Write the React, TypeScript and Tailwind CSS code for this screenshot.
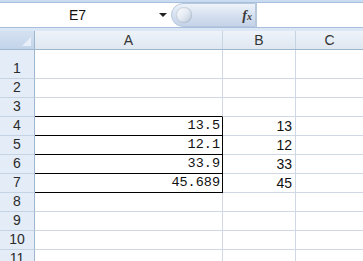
const rows: { n: number; a?: string; b?: string; h: number }[] = [
  { n: 1, h: 29 },
  { n: 2, h: 19 },
  { n: 3, h: 19 },
  { n: 4, a: '13.5', b: '13', h: 19 },
  { n: 5, a: '12.1', b: '12', h: 19 },
  { n: 6, a: '33.9', b: '33', h: 19 },
  { n: 7, a: '45.689', b: '45', h: 19 },
  { n: 8, h: 19 },
  { n: 9, h: 19 },
  { n: 10, h: 19 },
  { n: 11, h: 19 },
]

const grid = 'border-[#d0d7e5]'

export default function App() {
  return (
    <div className="w-[363px] h-[261px] overflow-hidden bg-white" style={{ fontFamily: '"Liberation Sans", Arial, sans-serif' }}>
      {/* ribbon edge */}
      <div className="h-[3px] bg-[#c9dbf0] border-b border-[#a7bfdc]" />

      {/* name box + formula bar */}
      <div className="flex h-[24px] bg-white">
        <div className="flex w-[171px] items-center">
          <span className="w-[155px] text-center text-[14px] text-[#111]">E7</span>
          <span className="ml-[4px] h-0 w-0 border-x-[4px] border-t-[4px] border-x-transparent border-t-[#222]" />
        </div>
        <div className="relative flex w-[85px] items-center justify-end rounded-l-full border border-[#b7c8dc] bg-gradient-to-b from-[#eef3fa] via-[#d6e1f0] to-[#c4d3e8] pr-[3px]">
          <span className="absolute left-[4px] top-[3px] h-[16px] w-[16px] rounded-full bg-gradient-to-br from-white via-[#e6ecf4] to-[#b9c6d6] shadow-[inset_0_0_2px_#8a9bb0]" />
          <span className="text-[14px] font-bold italic text-[#3a3a3a]" style={{ fontFamily: '"Liberation Serif", serif' }}>
            f<span className="text-[10px]">x</span>
          </span>
        </div>
        <div className="flex-1 border-l border-[#b7c8dc]" />
      </div>
      <div className="h-[4px] border-t border-[#a7bfdc] bg-[#dce7f5]" />

      {/* column headers */}
      <div className="flex h-[19px] text-[14px] text-[#333] bg-gradient-to-b from-[#eef3f9] to-[#dfe7f1] border-b border-[#9eb6ce]">
        <div className="relative w-[35px] border-r border-[#9eb6ce] bg-gradient-to-b from-[#d4e1f1] to-[#c3d4ea]">
          <span className="absolute bottom-[3px] right-[3px] h-0 w-0 border-b-[9px] border-l-[9px] border-l-transparent border-b-[#e8eff8]" />
        </div>
        <div className="flex w-[188px] items-center justify-center border-r border-[#c5d3e3]">A</div>
        <div className="flex w-[73px] items-center justify-center border-r border-[#c5d3e3]">B</div>
        <div className="flex w-[67px] items-center justify-center">C</div>
      </div>

      {rows.map((r) => {
        const boxed = r.a !== undefined
        const topOfBox = r.n === 3
        return (
          <div key={r.n} className="flex" style={{ height: r.h }}>
            <div className="flex w-[35px] items-end justify-center border-r border-b border-r-[#9eb6ce] border-b-[#c5d3e3] bg-[#e4ecf7] pb-[1px] text-[14px] leading-[17px] text-[#2b2b2b]">
              {r.n}
            </div>
            <div
              className={`flex w-[188px] items-end justify-end border-b border-r pb-[1px] pr-[2px] text-[13.5px] leading-[16px] text-[#111] ${
                boxed ? 'border-black' : topOfBox ? 'border-b-black border-r-[#d0d7e5]' : grid
              }`}
              style={{ fontFamily: '"Liberation Mono", "Courier New", monospace' }}
            >
              {r.a}
            </div>
            <div className={`flex w-[73px] items-end justify-end border-b border-r pb-[1px] pr-[3px] text-[14px] leading-[16px] text-[#111] ${grid}`}>
              {r.b}
            </div>
            <div className={`w-[67px] border-b ${grid}`} />
          </div>
        )
      })}
    </div>
  )
}
